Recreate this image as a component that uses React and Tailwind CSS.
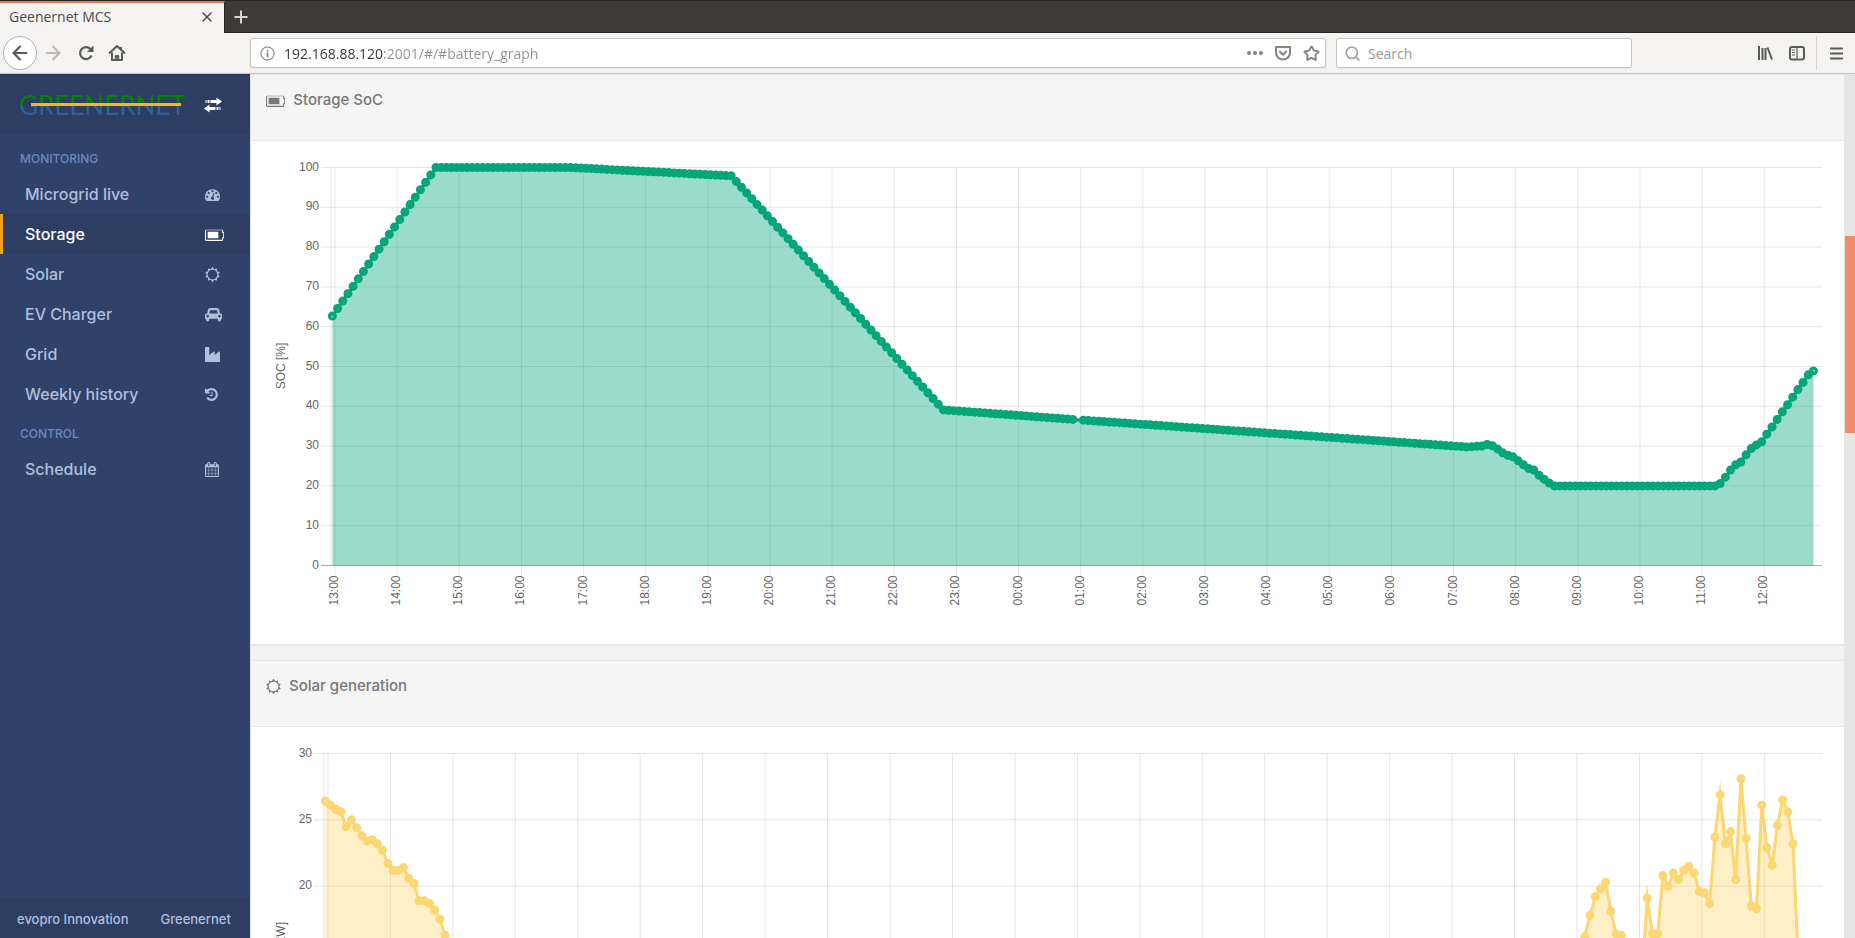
import React from 'react';
import { Plus, X, ArrowLeft, ArrowRight, Star, Search, Menu } from 'lucide-react';

const iconPaths = {
  dashboard: {
    width: 1792,
    d: 'M384 1152q0-53-37.5-90.5t-90.5-37.5-90.5 37.5-37.5 90.5 37.5 90.5 90.5 37.5 90.5-37.5 37.5-90.5zm192-448q0-53-37.5-90.5t-90.5-37.5-90.5 37.5-37.5 90.5 37.5 90.5 90.5 37.5 90.5-37.5 37.5-90.5zm428 481l101-382q6-26-7.5-48.5t-38.5-29.5-48 6.5-30 39.5l-101 382q-60 5-107 43.5t-63 98.5q-20 77 20 146t117 89 146-20 89-117q16-60-6-117t-72-91zm660-33q0-53-37.5-90.5t-90.5-37.5-90.5 37.5-37.5 90.5 37.5 90.5 90.5 37.5 90.5-37.5 37.5-90.5zm-640-640q0-53-37.5-90.5t-90.5-37.5-90.5 37.5-37.5 90.5 37.5 90.5 90.5 37.5 90.5-37.5 37.5-90.5zm448 192q0-53-37.5-90.5t-90.5-37.5-90.5 37.5-37.5 90.5 37.5 90.5 90.5 37.5 90.5-37.5 37.5-90.5zm320 448q0 261-141 483-19 29-54 29h-1402q-35 0-54-29-141-221-141-483 0-182 71-348t191-286 286-191 348-71 348 71 286 191 191 286 71 348z'
  },
  battery: {
    width: 2304,
    d: 'M320 576h1280v768h-1280zM2176 576q53 0 90.5 37.500t37.500 90.500v512q0 53-37.500 90.500t-90.500 37.500v160q0 66-47 113t-113 47h-1856q-66 0-113-47t-47-113v-1024q0-66 47-113t113-47h1856q66 0 113 47t47 113v160zM2176 1216v-512h-128v-288q0-14-9-23t-23-9h-1856q-14 0-23 9t-9 23v1088q0 14 9 23t23 9h1856q14 0 23-9t9-23v-288h128z'
  },
  sun: {
    width: 1792,
    d: 'M1472 896q0-117-45.5-223.5t-123-184-184-123-223.5-45.5-223.5 45.5-184 123-123 184-45.5 223.5 45.5 223.5 123 184 184 123 223.5 45.5 223.5-45.5 184-123 123-184 45.5-223.5zm276 277q-4 15-20 20l-292 96v306q0 16-13 26-15 10-29 4l-292-94-180 248q-10 13-26 13t-26-13l-180-248-292 94q-14 6-29-4-13-10-13-26v-306l-292-96q-16-5-20-20-5-17 4-29l180-248-180-248q-9-13-4-29 4-15 20-20l292-96v-306q0-16 13-26 15-10 29-4l292 94 180-248q9-12 26-12t26 12l180 248 292-94q14-6 29 4 13 10 13 26v306l292 96q16 5 20 20 5 16-4 29l-180 248 180 248q9 12 4 29z'
  },
  car: {
    width: 2048,
    d: 'M480 1088q0-66-47-113t-113-47-113 47-47 113 47 113 113 47 113-47 47-113zm36-320h1016l-89-357q-2-8-14-17.5t-21-9.5h-768q-9 0-21 9.5t-14 17.5zm1372 320q0-66-47-113t-113-47-113 47-47 113 47 113 113 47 113-47 47-113zm160-96v384q0 14-9 23t-23 9h-96v128q0 80-56 136t-136 56-136-56-56-136v-128h-1024v128q0 80-56 136t-136 56-136-56-56-136v-128h-96q-14 0-23-9t-9-23v-384q0-93 65.5-158.5t158.5-65.500h28l105-419q23-94 104-157.5t179-63.500h768q98 0 179 63.5t104 157.5l105 419h28q93 0 158.5 65.5t65.5 158.5z'
  },
  industry: {
    width: 1792,
    d: 'M448 0q26 0 45 19t19 45v891l536-429q17-14 40-14 26 0 45 19t19 45v379l536-429q17-14 40-14 26 0 45 19t19 45v1152q0 26-19 45t-45 19h-1664q-26 0-45-19t-19-45v-1664q0-26 19-45t45-19z'
  },
  history: {
    width: 1792,
    d: 'M1536 896q0 156-61 298t-164 245-245 164-298 61q-172 0-327-72.500t-264-204.500q-7-10-6.500-22.500t8.500-20.500l137-138q10-9 25-9 16 2 23 12 73 95 179 147t225 52q104 0 198.500-40.500t163.500-109.500 109.500-163.500 40.500-198.500-40.500-198.500-109.500-163.500-163.500-109.500-198.500-40.500q-98 0-188 35.500t-160 101.500l137 138q31 30 14 69-17 40-59 40h-448q-26 0-45-19t-19-45v-448q0-42 40-59 39-17 69 14l130 129q107-101 244.500-156.500t284.500-55.500q156 0 298 61t245 164 164 245 61 298zm-640-288v448q0 14-9 23t-23 9h-320q-14 0-23-9t-9-23v-64q0-14 9-23t23-9h224v-352q0-14 9-23t23-9h64q14 0 23 9t9 23z'
  },
  calendar: {
    width: 1664,
    d: 'M128 1664h288v-288h-288v288zm352 0h320v-288h-320v288zm-352-352h288v-320h-288v320zm352 0h320v-320h-320v320zm-352-384h288v-288h-288v288zm736 736h320v-288h-320v288zm-384-736h320v-288h-320v288zm768 736h288v-288h-288v288zm-384-352h320v-320h-320v320zm-352-864v-288q0-13-9.500-22.500t-22.500-9.500h-64q-13 0-22.500 9.500t-9.500 22.500v288q0 13 9.500 22.500t22.500 9.500h64q13 0 22.500-9.500t9.500-22.500zm736 864h288v-320h-288v320zm-384-384h320v-288h-320v288zm384 0h288v-288h-288v288zm32-480v-288q0-13-9.500-22.500t-22.500-9.500h-64q-13 0-22.500 9.500t-9.500 22.500v288q0 13 9.500 22.500t22.500 9.500h64q13 0 22.500-9.500t9.500-22.500zm384-64v1280q0 52-38 90t-90 38h-1408q-52 0-90-38t-38-90v-1280q0-52 38-90t90-38h128v-96q0-66 47-113t113-47h64q66 0 113 47t47 113v96h384v-96q0-66 47-113t113-47h64q66 0 113 47t47 113v96h128q52 0 90 38t38 90z'
  }
};

const Icon = ({ name, className }) => (
  <svg viewBox={`0 0 ${iconPaths[name].width} 1792`} className={className} fill="currentColor" fillRule="evenodd" aria-hidden="true">
    <path d={iconPaths[name].d} />
  </svg>
);

const menu = [
  {
    title: 'MONITORING',
    items: [
      { label: 'Microgrid live', icon: 'dashboard' },
      { label: 'Storage', icon: 'battery', active: true },
      { label: 'Solar', icon: 'sun' },
      { label: 'EV Charger', icon: 'car' },
      { label: 'Grid', icon: 'industry' },
      { label: 'Weekly history', icon: 'history' }
    ]
  },
  {
    title: 'CONTROL',
    items: [{ label: 'Schedule', icon: 'calendar' }]
  }
];

const hours = Array.from({ length: 24 }, (_, i) => `${String((13 + i) % 24).padStart(2, '0')}:00`);

// Fill in one sample every five minutes between the [index, value] knots
const expand = (knots, skip = []) => {
  const samples = [];
  knots.forEach(([index, value], i) => {
    const next = knots[i + 1];
    if (!next) {
      samples.push([index, value]);
      return;
    }
    for (let k = index; k < next[0]; k++) {
      samples.push([k, value + ((next[1] - value) * (k - index)) / (next[0] - index)]);
    }
  });
  return samples.filter(([k]) => !skip.includes(k));
};

const run = (start, values) => values.map((value, i) => [start + i, value]);

const socData = expand([
  [0, 62.7], [20, 100], [46, 100], [77, 97.9], [118, 39.1], [143, 36.7], [219, 29.8], [222, 30],
  ...run(223, [30.4, 30.1, 29.3, 28.3, 27.7, 27.3, 26.3, 25.3, 24.4, 24, 22.7, 21.7, 20.7, 20]),
  [267, 20],
  ...run(268, [20.6, 22.2, 24, 25.3, 26, 27.8, 29.4, 30.3, 31.1, 33, 34.8, 36.7, 38.6, 40.4, 42.3, 44.2, 46, 47.9, 48.9])
], [144]);

const solarData = expand([
  ...run(0, [26.4, 26.1, 25.8, 25.6, 24.5, 25, 24.4, 23.8, 23.4, 23.5, 23.2, 22.7, 21.7, 21.2, 21.2, 21.4, 20.6, 20.2, 18.9, 18.9, 18.7, 18.2, 17.5, 16.3, 14.6]),
  [70, 0], [200, 0], [241, 14.8],
  ...run(242, [16.2, 17.8, 19.2, 19.8, 20.3, 18.1, 16.4, 16.3, 14.2, 13.5, 13, 13.3, 19.1, 16.4, 16.4, 20.8, 20, 21, 20.5, 21.2, 21.5, 21, 19.6, 19.5, 18.7]),
  ...run(267, [23.7, 26.9, 23.2, 24.1, 20.5, 28.1, 23.6, 18.5, 18.3, 26.1, 22.9, 21.6, 24.6, 26.5, 25.6, 23.2, 14.5])
]);

const TOP = 26.5;
const BOTTOM = 424.5;
const RIGHT = 1571;

const Chart = ({ label, unitLabel, labelY, labelAnchor, data, max, step, left, hourWidth, color }) => {
  const firstHour = left + 4;
  const x = (index) => left + 1.4 + (index * hourWidth) / 12;
  const y = (value) => BOTTOM - (value / max) * (BOTTOM - TOP);
  const line = data.map(([k, v]) => `${x(k).toFixed(1)},${y(v).toFixed(1)}`).join(' ');
  const ticks = Array.from({ length: max / step + 1 }, (_, i) => i * step);

  return (
    <svg
      viewBox="0 0 1593 503"
      className="block w-full font-['Liberation_Sans',sans-serif] text-[12px]"
      role="img"
      aria-label={label}
    >
      <g stroke="rgba(0,0,0,0.1)" strokeWidth="1">
        {ticks.map(tick => (
          <line key={tick} x1={left - 10} x2={RIGHT} y1={y(tick)} y2={y(tick)} />
        ))}
        <line x1={left} x2={left} y1={TOP} y2={BOTTOM} />
        {hours.map((hour, i) => (
          <line key={hour} x1={firstHour + i * hourWidth} x2={firstHour + i * hourWidth} y1={TOP} y2={BOTTOM + 10} />
        ))}
      </g>
      <line x1={left - 10} x2={RIGHT} y1={BOTTOM} y2={BOTTOM} stroke="rgba(0,0,0,0.25)" />

      <g fill="#666">
        {ticks.map(tick => (
          <text key={tick} x={left - 12} y={y(tick) + 3} textAnchor="end">{tick}</text>
        ))}
        {hours.map((hour, i) => (
          <text
            key={hour}
            textAnchor="end"
            transform={`translate(${firstHour + 3 + i * hourWidth} ${BOTTOM + 10}) rotate(-90)`}
          >
            {hour}
          </text>
        ))}
        <text textAnchor={labelAnchor} transform={`translate(34 ${labelY}) rotate(-90)`}>{unitLabel}</text>
      </g>

      <polygon
        points={`${x(data[0][0])},${BOTTOM} ${line} ${x(data[data.length - 1][0])},${BOTTOM}`}
        fill={color}
        fillOpacity="0.4"
      />
      <polyline points={line} fill="none" stroke={color} strokeWidth="3" strokeMiterlimit="10" />
      <g fill={color} fillOpacity="0.4" stroke={color} strokeWidth="3">
        {data.map(([k, v]) => (
          <circle key={k} cx={x(k)} cy={y(v)} r="3" />
        ))}
      </g>
    </svg>
  );
};

const Card = ({ icon, iconClass, title, children }) => (
  <section className="border-y border-[#e6e6e6] bg-white shadow-xs">
    <header className="h-[66px] border-b border-[#e6e6e6] bg-[#f5f5f5] px-[15px] pt-[15px]">
      <h2 className="flex h-5 items-center gap-2 text-[15px] font-medium text-[#777]">
        <Icon name={icon} className={iconClass} />
        {title}
      </h2>
    </header>
    {children}
  </section>
);

const BrowserBar = () => (
  <div className="shrink-0 font-['Open_Sans',sans-serif] text-[14px]">
    <div className="flex h-[33px] border-t border-[#262522] bg-[#3c3b37]">
      <div className="flex w-[225px] items-center justify-between border-t-2 border-r border-t-[#f0764a] border-r-[#262522] bg-[#f5f4f2] pr-[9px] pb-[3px] pl-[9px] text-[#4a4a4a]">
        <span>Geenernet MCS</span>
        <button type="button" aria-label="Close tab"><X size={16} strokeWidth={2.2} /></button>
      </div>
      <div className="flex flex-1 items-center border-b border-[#262522] pl-[6px]">
        <button type="button" aria-label="New tab" className="text-[#d8d4cf]"><Plus size={20} strokeWidth={2.4} /></button>
      </div>
    </div>

    <div className="flex h-[41px] items-center border-b border-[#c4c2bf] bg-[#f4f3f1] pr-[10px] text-[#5a5a59]">
      <div className="flex w-[250px] shrink-0 items-center gap-[5px] pl-[3px]">
        <button type="button" aria-label="Back" className="flex size-[34px] items-center justify-center rounded-full border border-[#b2b0ad] bg-white">
          <ArrowLeft size={22} strokeWidth={2.4} />
        </button>
        <div className="flex items-center gap-[13px]">
          <button type="button" aria-label="Forward" className="text-[#b9b8b6]"><ArrowRight size={22} strokeWidth={2.2} /></button>
          <button type="button" aria-label="Reload">
            <svg viewBox="0 0 18 18" className="size-[18px]" fill="none" stroke="currentColor" strokeWidth="2.2">
              <path d="M14.600 11.500A6 6 0 1 1 13.500 5" />
              <path d="M16.500 1.500v6.500h-6.500z" fill="currentColor" stroke="none" />
            </svg>
          </button>
          <button type="button" aria-label="Home">
            <svg viewBox="0 0 18 18" className="size-[18px]" fill="none" stroke="currentColor" strokeWidth="2" strokeLinejoin="round">
              <path d="M1 9.500L9 2l8 7.500M4 8.500V16h10V8.500" />
              <path d="M7.800 16v-4h2.400V16M13 3v3" />
            </svg>
          </button>
        </div>
      </div>

      <div className="flex h-[30px] flex-1 items-center rounded-[3px] border border-[#c4c1bd] bg-white pr-[5px] pl-[9px] text-[#858483] shadow-xs">
        <svg viewBox="0 0 16 16" className="size-[15px] shrink-0" fill="none" stroke="currentColor" strokeWidth="1.200">
          <circle cx="8" cy="8" r="7" />
          <path d="M8 7v5M8 4v1.800" strokeWidth="1.800" />
        </svg>
        <input
          aria-label="Address"
          defaultValue="192.168.88.120:2001/#/#battery_graph"
          className="ml-[9px] min-w-0 flex-1 bg-linear-to-r from-[#333] from-[100px] to-[#929191] to-[100px] bg-clip-text text-transparent outline-none"
        />
        <div className="flex items-center gap-3">
          <button type="button" aria-label="Page actions">
            <svg viewBox="0 0 16 16" className="size-4" fill="currentColor">
              <circle cx="2" cy="8" r="2" /><circle cx="8" cy="8" r="2" /><circle cx="14" cy="8" r="2" />
            </svg>
          </button>
          <button type="button" aria-label="Save to Pocket">
            <svg viewBox="0 0 16 16" className="size-4" fill="none" stroke="currentColor" strokeWidth="2" strokeLinejoin="round">
              <path d="M1 2h14v5.500a7 7 0 0 1-14 0z" />
              <path d="M4.800 6.500L8 9.700l3.200-3.200" strokeLinecap="round" />
            </svg>
          </button>
          <button type="button" aria-label="Bookmark"><Star size={17} strokeWidth={2.6} strokeLinejoin="miter" /></button>
        </div>
      </div>

      <div className="ml-[10px] flex h-[30px] w-[296px] shrink-0 items-center gap-[7px] rounded-[3px] border border-[#c4c1bd] bg-white px-[7px] text-[#a5a4a3] shadow-xs">
        <Search size={17} strokeWidth={2.4} />
        <input aria-label="Search" placeholder="Search" className="min-w-0 flex-1 outline-none placeholder:text-[#989796]" />
      </div>

      <div className="ml-[125px] flex items-center">
        <button type="button" aria-label="Library">
          <svg viewBox="0 0 16 16" className="size-4" fill="none" stroke="currentColor" strokeWidth="2">
            <path d="M2 1v14M5.500 3v12M8.500 3v12M10.500 2.500l4.500 12" />
          </svg>
        </button>
        <button type="button" aria-label="Sidebars" className="ml-4">
          <svg viewBox="0 0 16 16" className="size-4" fill="none" stroke="currentColor" strokeWidth="2">
            <rect x="1" y="2" width="14" height="12.500" rx="2" />
            <path d="M8 2v12" strokeWidth="1.200" />
            <path d="M3 5h3M3 7.500h3M3 10h3" strokeWidth="1" />
          </svg>
        </button>
        <span className="ml-[11px] h-[34px] w-px bg-[#d6d4d1]" />
        <button type="button" aria-label="Open menu" className="ml-[11px]"><Menu size={17} strokeWidth={2.6} /></button>
      </div>
    </div>
  </div>
);

const Sidebar = () => (
  <aside className="flex w-[250px] shrink-0 flex-col bg-[#304269] text-[#b1bfdf]">
    <div className="flex h-[60px] items-center justify-between bg-[#2d3e62] pt-px pr-7 pl-[19px]">
      <a href="#/" className="relative bg-linear-to-b from-[#008500] from-50% to-[#34619b] to-50% bg-clip-text font-['Lato',sans-serif] text-[26px] leading-8 font-normal text-transparent">
        GREENERNET
        <span className="absolute top-[14px] right-[5px] left-3 h-[3px] bg-[#f5b62b]" />
      </a>
      <button type="button" aria-label="Toggle menu" className="text-white">
        <svg viewBox="0 0 18 16" className="h-4 w-[18px]" fill="currentColor">
          <path d="M1.500 3h1v3h-1zM3.500 3h2v3h-2zM6.500 3h6V.500L18 4.500l-5.500 4V6h-6z" />
          <path d="M16.500 10h-1v3h1zM14.500 10h-2v3h2zM11.500 10h-6V7.500L0 11.500l5.500 4V13h6z" />
        </svg>
      </button>
    </div>

    <nav className="flex-1 pt-[5px]">
      {menu.map(group => (
        <div key={group.title}>
          <h3 className="flex h-[35px] items-center pt-1 pl-5 text-[12px] font-medium text-[#6f88c4]">{group.title}</h3>
          {group.items.map(item => (
            <a
              key={item.label}
              href="#/"
              className={`flex h-10 items-center border-l-3 pl-[22px] text-[16px] font-medium ${
                item.active ? 'border-[#f0a01e] bg-[#2d3e62] text-white' : 'border-transparent'
              }`}
            >
              <span className="w-[180px]">{item.label}</span>
              <Icon name={item.icon} className="h-[15px] w-auto" />
            </a>
          ))}
        </div>
      ))}
    </nav>

    <footer className="flex h-10 items-center gap-8 bg-[#2d3e62] pt-1 pl-[17px] text-[13px] font-medium">
      <a href="#/">evopro Innovation</a>
      <a href="#/">Greenernet</a>
    </footer>
  </aside>
);

const App = () => {
  return (
    <div className="flex h-screen flex-col overflow-hidden">
      <BrowserBar />
      <div className="flex min-h-0 flex-1 font-['Inter',sans-serif]">
        <Sidebar />
        <main className="min-w-0 flex-1 overflow-hidden border-l border-[#e2e2e2] bg-[#f2f2f2]">
          <div className="flex flex-col gap-[15px]">
            <Card icon="battery" iconClass="h-[15px] w-auto" title="Storage SoC">
              <Chart
                label="Storage SoC"
                unitLabel="SOC [%]"
                labelY={225}
                labelAnchor="middle"
                data={socData}
                max={100}
                step={10}
                left={80}
                hourWidth={62.14}
                color="#03a678"
              />
            </Card>
            <Card icon="sun" iconClass="h-[15px] w-auto" title="Solar generation">
              <Chart
                label="Solar generation"
                unitLabel="Power [kW]"
                labelY={195}
                labelAnchor="end"
                data={solarData}
                max={30}
                step={5}
                left={73}
                hourWidth={62.45}
                color="#fcd670"
              />
            </Card>
          </div>
        </main>
        <div className="w-[11px] shrink-0 bg-[#e5e5e5] pt-[162px] pl-px">
          <div className="h-[197px] bg-[#f08d65]" />
        </div>
      </div>
    </div>
  );
};

export default App;
